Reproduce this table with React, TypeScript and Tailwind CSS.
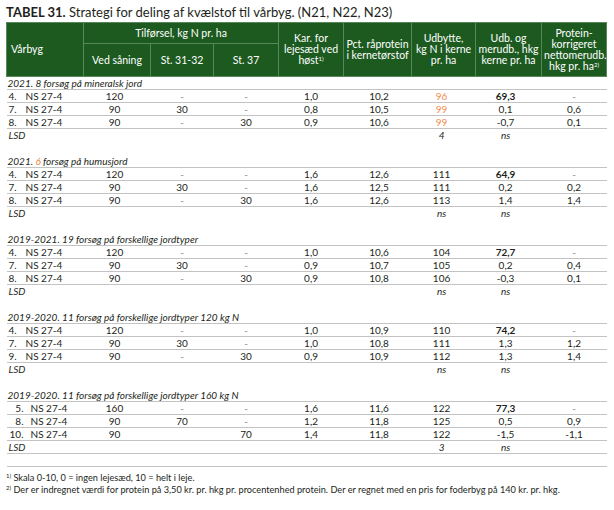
import React from "react";

type Row = {
  n: string;
  ved: string;
  s31: string;
  s37: string;
  kar: string;
  pct: string;
  udb: string;
  mer: string;
  prot: string;
  orange?: boolean;
  bold?: boolean;
};

type Section = {
  title: React.ReactNode;
  rows: Row[];
  lsd: [string, string];
  last?: boolean;
};

const sections: Section[] = [
  {
    title: "2021. 8 forsøg på mineralsk jord",
    rows: [
      { n: "4.", ved: "120", s31: "-", s37: "-", kar: "1,0", pct: "10,2", udb: "96", mer: "69,3", prot: "-", orange: true, bold: true },
      { n: "7.", ved: "90", s31: "30", s37: "-", kar: "0,8", pct: "10,5", udb: "99", mer: "0,1", prot: "0,6", orange: true },
      { n: "8.", ved: "90", s31: "-", s37: "30", kar: "0,9", pct: "10,6", udb: "99", mer: "-0,7", prot: "0,1", orange: true },
    ],
    lsd: ["4", "ns"],
  },
  {
    title: (
      <>
        2021. <span className="text-[#f07c3c]">6</span> forsøg på humusjord
      </>
    ),
    rows: [
      { n: "4.", ved: "120", s31: "-", s37: "-", kar: "1,6", pct: "12,6", udb: "111", mer: "64,9", prot: "-", bold: true },
      { n: "7.", ved: "90", s31: "30", s37: "-", kar: "1,6", pct: "12,5", udb: "111", mer: "0,2", prot: "0,2" },
      { n: "8.", ved: "90", s31: "-", s37: "30", kar: "1,6", pct: "12,6", udb: "113", mer: "1,4", prot: "1,4" },
    ],
    lsd: ["ns", "ns"],
  },
  {
    title: "2019-2021. 19 forsøg på forskellige jordtyper",
    rows: [
      { n: "4.", ved: "120", s31: "-", s37: "-", kar: "1,0", pct: "10,6", udb: "104", mer: "72,7", prot: "-", bold: true },
      { n: "7.", ved: "90", s31: "30", s37: "-", kar: "0,9", pct: "10,7", udb: "105", mer: "0,2", prot: "0,4" },
      { n: "8.", ved: "90", s31: "-", s37: "30", kar: "0,9", pct: "10,8", udb: "106", mer: "-0,3", prot: "0,1" },
    ],
    lsd: ["ns", "ns"],
  },
  {
    title: "2019-2020. 11 forsøg på forskellige jordtyper 120 kg N",
    rows: [
      { n: "4.", ved: "120", s31: "-", s37: "-", kar: "1,0", pct: "10,9", udb: "110", mer: "74,2", prot: "-", bold: true },
      { n: "7.", ved: "90", s31: "30", s37: "-", kar: "1,0", pct: "10,8", udb: "111", mer: "1,3", prot: "1,2" },
      { n: "9.", ved: "90", s31: "-", s37: "30", kar: "0,9", pct: "10,9", udb: "112", mer: "1,3", prot: "1,4" },
    ],
    lsd: ["ns", "ns"],
  },
  {
    title: "2019-2020. 11 forsøg på forskellige jordtyper 160 kg N",
    rows: [
      { n: "5.", ved: "160", s31: "-", s37: "-", kar: "1,6", pct: "11,6", udb: "122", mer: "77,3", prot: "-", bold: true },
      { n: "8.", ved: "90", s31: "70", s37: "-", kar: "1,2", pct: "11,8", udb: "125", mer: "0,5", prot: "0,9" },
      { n: "10.", ved: "90", s31: "", s37: "70", kar: "1,4", pct: "11,8", udb: "122", mer: "-1,5", prot: "-1,1" },
    ],
    lsd: ["3", "ns"],
    last: true,
  },
];

const widths = [77, 67, 63, 65, 65, 68, 64, 66, 65];

function Val({ v }: { v: string }) {
  if (v === "-") return <span className="text-[#8a8a8a]">-</span>;
  return <>{v}</>;
}

function SectionRows({ s }: { s: Section }) {
  const line = "border-b border-[#c3c3c3]";
  return (
    <>
      <tr className={`h-[13px] ${line}`}>
        <td colSpan={9} className="pl-[1px] italic whitespace-nowrap">
          {s.title}
        </td>
      </tr>
      {s.rows.map((r) => (
        <tr key={r.n} className={`h-[13px] ${line}`}>
          <td className="pl-[2px] whitespace-nowrap">
            <span
              className={
                s.last
                  ? "inline-block w-[15px] text-right"
                  : "inline-block w-[17px]"
              }
            >
              {r.n}
            </span>
            <span className={s.last ? "ml-[7px]" : ""}>NS 27-4</span>
          </td>
          <td className="text-center pr-[5px]">{r.ved}</td>
          <td className="text-center">
            <Val v={r.s31} />
          </td>
          <td className="text-center">
            <Val v={r.s37} />
          </td>
          <td className="text-center">{r.kar}</td>
          <td className="text-center pl-[3px]">{r.pct}</td>
          <td className={`text-center pr-[4px] ${r.orange ? "text-[#f08a4b]" : ""}`}>
            {r.udb}
          </td>
          <td className={`text-center pr-[6px] ${r.bold ? "font-bold" : ""}`}>
            {r.mer}
          </td>
          <td className="text-center">
            <Val v={r.prot} />
          </td>
        </tr>
      ))}
      <tr className={`h-[13px] ${s.last ? line : ""}`}>
        <td colSpan={6} className="pl-[2px] italic">
          LSD
        </td>
        <td className="text-center italic pr-[4px]">{s.lsd[0]}</td>
        <td className="text-center italic pr-[6px]">{s.lsd[1]}</td>
        <td></td>
      </tr>
      <tr className={`h-[13px] ${s.last ? line : ""}`}>
        <td colSpan={9}></td>
      </tr>
    </>
  );
}

export default function App() {
  const th = "border border-[#58875a] font-normal text-center align-middle px-[2px]";
  return (
    <div className="w-[614px] h-[510px] bg-white px-[6px] pt-[4px] text-[#231f20] font-['Lato','Open_Sans',sans-serif]">
      <div className="h-[16px] text-[13px] leading-[16px] mb-[2px] whitespace-nowrap">
        <span className="font-bold">TABEL 31.</span> Strategi for deling af kvælstof til vårbyg. (N21, N22, N23)
      </div>

      <table className="table-fixed border-collapse w-[600px] text-[10px] leading-[12px]">
        <colgroup>
          {widths.map((w, i) => (
            <col key={i} style={{ width: w }} />
          ))}
        </colgroup>
        <thead className="bg-[#1c5a20] text-white text-[10.5px] leading-[11px]">
          <tr className="h-[21px]">
            <th rowSpan={2} className={`${th} text-left pl-[4px] font-bold`}>
              Vårbyg
            </th>
            <th colSpan={3} className={th}>
              Tilførsel, kg N pr. ha
            </th>
            <th rowSpan={2} className={th}>
              Kar. for
              <br />
              lejesæd ved
              <br />
              høst<sup className="text-[6px]">1)</sup>
            </th>
            <th rowSpan={2} className={th}>
              Pct. råprotein
              <br />i kernetørstof
            </th>
            <th rowSpan={2} className={th}>
              Udbytte,
              <br />
              kg N i kerne
              <br />
              pr. ha
            </th>
            <th rowSpan={2} className={th}>
              Udb. og
              <br />
              merudb., hkg
              <br />
              kerne pr. ha
            </th>
            <th rowSpan={2} className={th}>
              Protein-
              <br />
              korrigeret
              <br />
              nettomerudb.,
              <br />
              hkg pr. ha<sup className="text-[6px]">2)</sup>
            </th>
          </tr>
          <tr className="h-[33px]">
            <th className={th}>Ved såning</th>
            <th className={th}>St. 31-32</th>
            <th className={th}>St. 37</th>
          </tr>
        </thead>
        <tbody>
          <tr className="h-0 border-t border-[#a9c8a9]"></tr>
          {sections.map((s, i) => (
            <SectionRows key={i} s={s} />
          ))}
        </tbody>
      </table>

      <div className="mt-[5px] text-[9.2px] leading-[12px] whitespace-nowrap">
        <div>
          <sup className="text-[6px]">1)</sup> Skala 0-10, 0 = ingen lejesæd, 10 = helt i leje.
        </div>
        <div>
          <sup className="text-[6px]">2)</sup> Der er indregnet værdi for protein på 3,50 kr. pr. hkg pr. procentenhed protein. Der er regnet med en pris for foderbyg på 140 kr. pr. hkg.
        </div>
      </div>
    </div>
  );
}
